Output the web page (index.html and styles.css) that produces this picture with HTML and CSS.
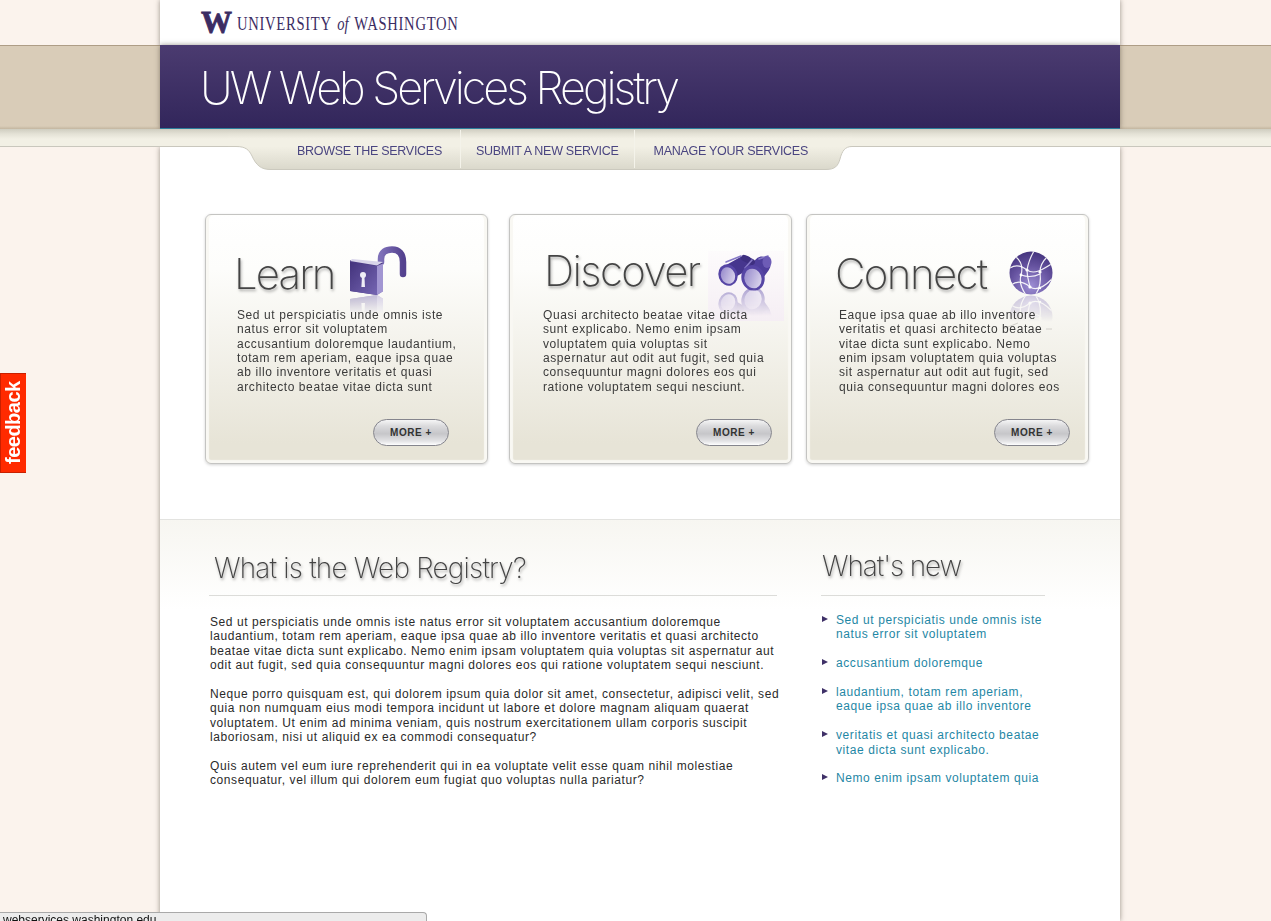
FILE: index.html
```html
<!DOCTYPE html>
<html lang="en">
<head>
    <meta charset="UTF-8">
    <meta name="viewport" content="width=device-width, initial-scale=1.0">
    <title>UW Web Services Registry</title>
    <link rel="stylesheet" href="styles.css">
</head>
<body>
    <div class="top-band">
        <div class="column logo">
            <span class="logo-w">W</span>
            <span class="logo-name">UNIVERSITY <em>of</em> WASHINGTON</span>
        </div>
    </div>

    <div class="title-band">
        <header class="column banner">
            <h1>UW Web Services Registry</h1>
        </header>
    </div>

    <div class="nav-band">
        <nav class="nav">
            <svg class="nav-shape" viewBox="228 129 624 42" width="624" height="42">
                <defs>
                    <linearGradient id="tab" x1="0" y1="0" x2="0" y2="1">
                        <stop offset="0" stop-color="#cfcdc0"/>
                        <stop offset="0.12" stop-color="#e4e2d6"/>
                        <stop offset="0.24" stop-color="#f2f0e5"/>
                        <stop offset="0.43" stop-color="#f2f0e5"/>
                        <stop offset="1" stop-color="#dad8cb"/>
                    </linearGradient>
                </defs>
                <path fill="url(#tab)" d="M228 146.5 H236 C246 146.5 249 150 252 156 C256 165 261 169.5 270 169.5 H826 C835 169.5 838 166 840 159 C842 151 845 146.5 852 146.5 V129 H228 Z"/>
                <path fill="none" stroke="#cbc9be" d="M228 146.5 H236 C246 146.5 249 150 252 156 C256 165 261 169.5 270 169.5 H826 C835 169.5 838 166 840 159 C842 151 845 146.5 852 146.5"/>
            </svg>
            <a href="#">Browse the services</a>
            <a href="#">Submit a new service</a>
            <a href="#">Manage your services</a>
        </nav>
    </div>

    <main class="column main">
        <section class="cards">
            <article class="card card-learn">
                <h2>Learn</h2>
                <svg class="icon icon-lock" viewBox="345 240 70 80" width="70" height="80">
                    <defs>
                        <linearGradient id="lockBody" x1="0" y1="0" x2="1" y2="1">
                            <stop offset="0" stop-color="#43337c"/>
                            <stop offset="1" stop-color="#7565b2"/>
                        </linearGradient>
                        <linearGradient id="lockArc" x1="0" y1="0" x2="1" y2="0">
                            <stop offset="0" stop-color="#7e70b8"/>
                            <stop offset="1" stop-color="#54428f"/>
                        </linearGradient>
                        <linearGradient id="fadeLock" x1="0" y1="295" x2="0" y2="314" gradientUnits="userSpaceOnUse">
                            <stop offset="0" stop-color="#fff" stop-opacity="0.4"/>
                            <stop offset="1" stop-color="#fff" stop-opacity="0"/>
                        </linearGradient>
                        <mask id="lockMask"><rect x="345" y="295" width="70" height="25" fill="url(#fadeLock)"/></mask>
                        <g id="lockShape">
                            <path fill="none" stroke="url(#lockArc)" stroke-width="6.5" stroke-linecap="round" d="M381 262 V259 C381 252 386 249.5 392 249.5 C399 249.5 403 254 403 262 V274"/>
                            <path fill="#4b3b84" d="M350 260 L383 263 V291 L377 295 L350 291 Z"/>
                            <path fill="url(#lockBody)" d="M350 262 L377 266 V295 L350 291 Z"/>
                            <path fill="#a296d2" d="M377 266 L383 263.5 V291.5 L377 295 Z"/>
                            <path fill="#d9d5ea" d="M350 261 L352 259 L383 262 L377 265.5 Z"/>
                            <circle cx="363" cy="275" r="3" fill="#efedf6"/>
                            <path fill="#efedf6" d="M362 276 H364.4 L365 287 H361.4 Z"/>
                        </g>
                    </defs>
                    <use href="#lockShape"/>
                    <g mask="url(#lockMask)">
                        <use href="#lockShape" transform="matrix(1 0 0 -1 0 590)"/>
                    </g>
                </svg>
                <p class="card-text">Sed ut perspiciatis unde omnis iste<br>natus error sit voluptatem<br>accusantium doloremque laudantium,<br>totam rem aperiam, eaque ipsa quae<br>ab illo inventore veritatis et quasi<br>architecto beatae vitae dicta sunt</p>
                <a class="more" href="#">MORE +</a>
            </article>

            <article class="card card-discover">
                <h2>Discover</h2>
                <svg class="icon icon-binoculars" viewBox="708 251 76 70" width="76" height="70">
                    <defs>
                        <linearGradient id="binoBack" x1="0" y1="0" x2="0" y2="1">
                            <stop offset="0" stop-color="#fdfbfc"/>
                            <stop offset="1" stop-color="#f5eef4"/>
                        </linearGradient>
                        <linearGradient id="lens" x1="0" y1="0" x2="1" y2="1">
                            <stop offset="0" stop-color="#8f82c8"/>
                            <stop offset="1" stop-color="#e6e1f2"/>
                        </linearGradient>
                        <linearGradient id="fadeBino" x1="0" y1="289" x2="0" y2="316" gradientUnits="userSpaceOnUse">
                            <stop offset="0" stop-color="#fff" stop-opacity="0.45"/>
                            <stop offset="1" stop-color="#fff" stop-opacity="0"/>
                        </linearGradient>
                        <mask id="binoMask"><rect x="708" y="289" width="76" height="32" fill="url(#fadeBino)"/></mask>
                        <g id="binoShape">
                            <path stroke="#46368e" stroke-width="15" stroke-linecap="round" d="M729 272 L745 263"/>
                            <path stroke="#4f3f9c" stroke-width="17" stroke-linecap="round" d="M754 276 L762 265"/>
                            <path stroke="#3e2f80" stroke-width="6" stroke-linecap="round" d="M744 258 L752 262"/>
                            <path fill="none" stroke="#8679c6" stroke-width="1.6" stroke-linecap="round" d="M726 262 L741 256 M745 268 L752 260 M759 259 L768 256"/>
                            <ellipse cx="767" cy="262" rx="4.5" ry="6" fill="#6d5cb6"/>
                            <ellipse cx="728" cy="275" rx="9.5" ry="11" transform="rotate(-20 728 275)" fill="#5645a5"/>
                            <ellipse cx="728" cy="275.5" rx="7" ry="8.5" transform="rotate(-20 728 275.5)" fill="url(#lens)"/>
                            <ellipse cx="753" cy="278" rx="11.5" ry="13" transform="rotate(-20 753 278)" fill="#5645a5"/>
                            <ellipse cx="753" cy="278.5" rx="8.5" ry="10" transform="rotate(-20 753 278.5)" fill="url(#lens)"/>
                        </g>
                    </defs>
                    <rect x="708" y="251" width="76" height="70" fill="url(#binoBack)"/>
                    <use href="#binoShape"/>
                    <g mask="url(#binoMask)">
                        <use href="#binoShape" transform="matrix(1 0 0 -1 0 578)"/>
                    </g>
                </svg>
                <p class="card-text">Quasi architecto beatae vitae dicta<br>sunt explicabo. Nemo enim ipsam<br>voluptatem quia voluptas sit<br>aspernatur aut odit aut fugit, sed quia<br>consequuntur magni dolores eos qui<br>ratione voluptatem sequi nesciunt.</p>
                <a class="more" href="#">MORE +</a>
            </article>

            <article class="card card-connect">
                <h2>Connect</h2>
                <svg class="icon icon-globe" viewBox="1000 248 60 85" width="60" height="85">
                    <defs>
                        <radialGradient id="globeFill" cx="0.5" cy="0.8" r="0.85">
                            <stop offset="0" stop-color="#9d8ed4"/>
                            <stop offset="0.55" stop-color="#6653a0"/>
                            <stop offset="1" stop-color="#3f2f78"/>
                        </radialGradient>
                        <linearGradient id="fadeGlobe" x1="0" y1="295" x2="0" y2="322" gradientUnits="userSpaceOnUse">
                            <stop offset="0" stop-color="#fff" stop-opacity="0.38"/>
                            <stop offset="1" stop-color="#fff" stop-opacity="0"/>
                        </linearGradient>
                        <mask id="globeMask"><rect x="1000" y="295" width="60" height="30" fill="url(#fadeGlobe)"/></mask>
                        <clipPath id="globeClip"><circle cx="1031" cy="273" r="21.5"/></clipPath>
                        <g id="globeShape">
                            <circle cx="1031" cy="273" r="21.5" fill="url(#globeFill)"/>
                            <g clip-path="url(#globeClip)" fill="none" stroke="#fff" stroke-opacity="0.9" stroke-width="1.2">
                                <path d="M1010 268 C1016 264 1022 266 1027 270 C1034 275 1042 270 1053 263"/>
                                <path d="M1011 285 C1018 280 1024 282 1030 287 C1036 291 1044 287 1052 279"/>
                                <path d="M1016 257 C1022 262 1023 268 1021 275 C1019 282 1021 288 1026 295"/>
                                <path d="M1034 251 C1030 258 1028 264 1027 270 C1027 277 1029 282 1030 287"/>
                                <path d="M1047 257 C1042 262 1040 267 1040 272 C1041 280 1040 288 1036 294"/>
                                <path d="M1021 275 C1027 277 1034 277 1040 274"/>
                            </g>
                            <g fill="#fff">
                                <circle cx="1027" cy="270" r="1.6"/>
                                <circle cx="1021" cy="275" r="1.4"/>
                                <circle cx="1040" cy="272" r="1.6"/>
                                <circle cx="1030" cy="287" r="1.6"/>
                                <circle cx="1040" cy="288" r="1.2"/>
                            </g>
                        </g>
                    </defs>
                    <use href="#globeShape"/>
                    <g mask="url(#globeMask)">
                        <use href="#globeShape" transform="matrix(1 0 0 -1 0 590)"/>
                    </g>
                    <path fill="none" stroke="#c9c7c2" stroke-width="0.8" d="M1003 329 L1018 323 M1046 329 H1052"/>
                </svg>
                <p class="card-text">Eaque ipsa quae ab illo inventore<br>veritatis et quasi architecto beatae<br>vitae dicta sunt explicabo. Nemo<br>enim ipsam voluptatem quia voluptas<br>sit aspernatur aut odit aut fugit, sed<br>quia consequuntur magni dolores eos</p>
                <a class="more" href="#">MORE +</a>
            </article>
        </section>

        <section class="info">
            <div class="about">
                <h3>What is the Web Registry?</h3>
                <p>Sed ut perspiciatis unde omnis iste natus error sit voluptatem accusantium doloremque<br>laudantium, totam rem aperiam, eaque ipsa quae ab illo inventore veritatis et quasi architecto<br>beatae vitae dicta sunt explicabo. Nemo enim ipsam voluptatem quia voluptas sit aspernatur aut<br>odit aut fugit, sed quia consequuntur magni dolores eos qui ratione voluptatem sequi nesciunt.</p>
                <p>Neque porro quisquam est, qui dolorem ipsum quia dolor sit amet, consectetur, adipisci velit, sed<br>quia non numquam eius modi tempora incidunt ut labore et dolore magnam aliquam quaerat<br>voluptatem. Ut enim ad minima veniam, quis nostrum exercitationem ullam corporis suscipit<br>laboriosam, nisi ut aliquid ex ea commodi consequatur?</p>
                <p>Quis autem vel eum iure reprehenderit qui in ea voluptate velit esse quam nihil molestiae<br>consequatur, vel illum qui dolorem eum fugiat quo voluptas nulla pariatur?</p>
            </div>
            <aside class="news">
                <h3>What's new</h3>
                <ul>
                    <li><a href="#">Sed ut perspiciatis unde omnis iste<br>natus error sit voluptatem</a></li>
                    <li><a href="#">accusantium doloremque</a></li>
                    <li><a href="#">laudantium, totam rem aperiam,<br>eaque ipsa quae ab illo inventore</a></li>
                    <li><a href="#">veritatis et quasi architecto beatae<br>vitae dicta sunt explicabo.</a></li>
                    <li><a href="#">Nemo enim ipsam voluptatem quia</a></li>
                </ul>
            </aside>
        </section>
    </main>

    <a class="feedback" href="#">feedback</a>
    <div class="status">webservices.washington.edu</div>
</body>
</html>
```

FILE: styles.css
```css
* {
    margin: 0;
    padding: 0;
    box-sizing: border-box;
}

html, body {
    height: 100%;
    overflow: hidden;
}

body {
    background: #fbf3ed;
    color: #333;
    font-family: "Liberation Sans", Arial, sans-serif;
}

a {
    text-decoration: none;
}

.column {
    width: 960px;
    margin-left: 160px;
    box-shadow: 0 0 5px rgba(70, 60, 50, 0.55);
}

/* top strip */
.top-band {
    height: 45px;
}

.logo {
    height: 45px;
    background: #fff;
    padding-left: 41px;
    display: flex;
    align-items: center;
    color: #3b2c63;
    overflow: hidden;
}

.logo-w {
    font-family: "Liberation Serif", serif;
    font-weight: bold;
    font-size: 31px;
    line-height: 45px;
    width: 36px;
    margin-top: -1px;
    -webkit-text-stroke: 0.8px #3b2c63;
}

.logo-name {
    margin-top: 3px;
    font-family: "Liberation Serif", serif;
    font-size: 18px;
    letter-spacing: 0.9px;
    white-space: nowrap;
    transform: scaleX(0.81);
    transform-origin: left center;
}

.logo-name em {
    letter-spacing: 0;
    margin: 0 2px;
}

/* purple title */
.title-band {
    height: 84px;
    background: linear-gradient(#d9ccb8 0, #d9ccb8 80px, #bcae98 84px);
    border-top: 1px solid #ae9d86;
}

.banner {
    height: 84px;
    margin-top: -1px;
    background: linear-gradient(#4b3b70, #32265b);
    border-bottom: 1px solid #2c7f9c;
    padding-left: 40px;
}

.banner h1 {
    font-family: Inter, "Liberation Sans", sans-serif;
    font-weight: 150;
    font-size: 45px;
    letter-spacing: -3.05px;
    line-height: 86px;
    color: #fff;
    white-space: nowrap;
    will-change: transform;
}

/* nav band and tab */
.nav-band {
    height: 18px;
    background: linear-gradient(#cfcdc0, #e4e2d6 5px, #f2f0e5 10px);
    border-bottom: 1px solid #c9c7bd;
}

.nav {
    position: relative;
    z-index: 2;
    width: 624px;
    height: 41px;
    margin-left: 228px;
    padding: 1px 0 0 54px;
    display: flex;
}

.nav-shape {
    position: absolute;
    left: 0;
    top: 0;
}

.nav a {
    position: relative;
    height: 38px;
    padding: 0 15px;
    line-height: 42px;
    font-size: 12.5px;
    letter-spacing: -0.28px;
    text-transform: uppercase;
    white-space: nowrap;
    color: #4a4580;
    border-right: 1px solid #f4f3ea;
}

.nav a:first-of-type {
    padding-right: 18px;
}

.nav a:last-of-type {
    padding-left: 19px;
    border-right: none;
}

/* main sheet */
.main {
    height: calc(100vh - 147px);
    background: #fff;
    padding-top: 67px;
    clip-path: inset(0 -8px 0 -8px);
}

.cards {
    display: flex;
    gap: 14px;
    margin-left: 45px;
}

.card {
    position: relative;
    width: 283px;
    height: 250px;
    display: flex;
    flex-direction: column;
    border: 1px solid #c4c4c2;
    border-radius: 6px;
    background: linear-gradient(#fff 0, #fdfdfb 22%, #e7e4d7 92%, #e7e4d7 100%);
    box-shadow: inset 3px 0 1px #f9f8f3, inset -3px 0 1px #f9f8f3, inset 0 -3px 1px #f9f8f3, 0 1px 3px rgba(0, 0, 0, 0.18);
}

.card-learn {
    margin-right: 7px;
    padding-left: 31px;
}

.card-discover {
    padding-left: 33px;
}

.card-connect {
    padding-left: 32px;
}

.card h2 {
    font-family: Inter, "Liberation Sans", sans-serif;
    font-weight: 150;
    font-size: 42px;
    line-height: 50px;
    height: 50px;
    letter-spacing: -1.9px;
    margin-top: 34px;
    margin-left: -3px;
    color: #444;
    text-shadow: 1px 2px 3px rgba(0, 0, 0, 0.35);
    white-space: nowrap;
    will-change: transform;
}

.card-discover h2 {
    margin-top: 31px;
    margin-left: 1px;
    height: 53px;
    letter-spacing: -1.6px;
}

.card-connect h2 {
    margin-left: -4px;
    letter-spacing: -1.6px;
}

.icon {
    position: absolute;
}

.icon-lock {
    left: 139px;
    top: 25px;
}

.icon-binoculars {
    left: 198px;
    top: 36px;
}

.icon-globe {
    left: 193px;
    top: 33px;
}

.card-text {
    position: relative;
    margin-top: 9px;
    font-size: 12px;
    line-height: 14.35px;
    letter-spacing: 0.59px;
    color: #3a3a3a;
    white-space: nowrap;
}

.more {
    align-self: flex-end;
    width: 76px;
    height: 27px;
    margin-top: auto;
    margin-bottom: 17px;
    border: 1px solid #85858d;
    border-radius: 14px;
    background: linear-gradient(#f6f6f6, #dadadc 25%, #c6c6c9 55%, #e4e4e6 85%, #fff);
    font-size: 10px;
    font-weight: bold;
    letter-spacing: 0.55px;
    line-height: 25px;
    text-align: center;
    color: #333;
}

.card-learn .more {
    margin-right: 38px;
}

.card-discover .more {
    margin-right: 19px;
}

.card-connect .more {
    margin-right: 18px;
}

/* lower half */
.info {
    display: flex;
    margin-top: 55px;
    height: 402px;
    padding-left: 49px;
    border-top: 1px solid #e3e3e0;
    background: linear-gradient(#f7f6f1, #fff 90px);
}

.info h3 {
    font-family: Inter, "Liberation Sans", sans-serif;
    font-weight: 150;
    font-size: 28px;
    line-height: 40px;
    letter-spacing: -0.82px;
    height: 76px;
    padding-top: 28px;
    color: #444;
    text-shadow: 1px 2px 3px rgba(0, 0, 0, 0.35);
    border-bottom: 1px solid #dcdcd9;
    white-space: nowrap;
    will-change: transform;
}

.about {
    width: 568px;
}

.about h3 {
    padding-left: 5px;
}

.about p {
    margin: 19px 0 -4.6px 1px;
    font-size: 12px;
    line-height: 14.4px;
    letter-spacing: 0.58px;
    color: #2a2a2a;
    white-space: nowrap;
}

.news {
    width: 224px;
    margin-left: 44px;
}

.news h3 {
    padding-left: 1px;
    padding-top: 26px;
    letter-spacing: -1.1px;
}

.news ul {
    list-style: none;
    margin-top: 17px;
}

.news li {
    position: relative;
    padding-left: 15px;
    margin-bottom: 14.4px;
    font-size: 12px;
    line-height: 14.4px;
    letter-spacing: 0.59px;
    white-space: nowrap;
}

.news li::before {
    content: "";
    position: absolute;
    left: 1px;
    top: 3px;
    border-left: 6px solid #3f3168;
    border-top: 3.5px solid transparent;
    border-bottom: 3.5px solid transparent;
}

.news a {
    color: #1f87a5;
}

/* overlays */
.feedback {
    position: fixed;
    left: 0;
    top: 373px;
    width: 26px;
    height: 100px;
    background: #ff2a00;
    border: 1px solid #c92000;
    border-left: none;
    color: #fff;
    font-size: 20px;
    font-weight: bold;
    letter-spacing: -0.5px;
    line-height: 24px;
    text-align: center;
    writing-mode: vertical-rl;
    transform: rotate(180deg);
}

.status {
    position: fixed;
    left: 0;
    bottom: 0;
    width: 427px;
    height: 9px;
    padding-left: 3px;
    overflow: hidden;
    background: #ececec;
    border: 1px solid #a9a9a9;
    border-bottom: none;
    border-left: none;
    border-top-right-radius: 4px;
    font-size: 12px;
    line-height: 15px;
    color: #111;
}
```
